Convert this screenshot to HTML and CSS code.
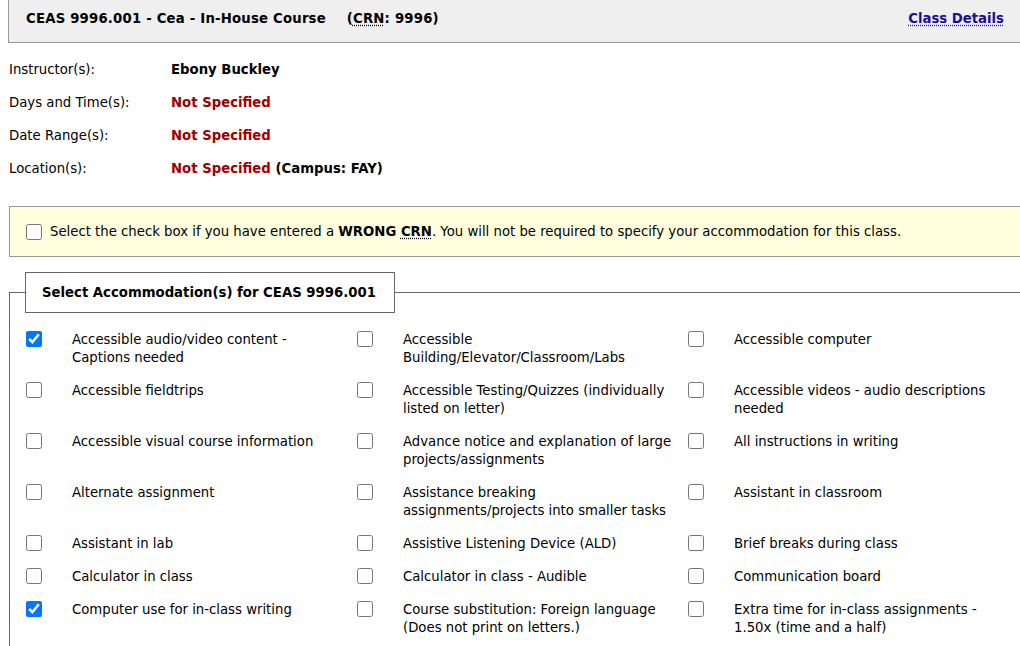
FILE: index.html
```html
<!DOCTYPE html>
<html>
<head>
<meta charset="utf-8">
<link rel="stylesheet" href="styles.css">
</head>
<body>
<div class="page">
  <div class="course-header">
    <div class="course-title">CEAS 9996.001 - Cea - In-House Course <span class="crn">(<abbr>CRN</abbr>: 9996)</span></div>
    <a class="details-link" href="#">Class Details</a>
  </div>

  <table class="info">
    <tr><td class="info-label">Instructor(s):</td><td class="info-value">Ebony Buckley</td></tr>
    <tr><td class="info-label">Days and Time(s):</td><td class="info-value"><span class="missing">Not Specified</span></td></tr>
    <tr><td class="info-label">Date Range(s):</td><td class="info-value"><span class="missing">Not Specified</span></td></tr>
    <tr><td class="info-label">Location(s):</td><td class="info-value"><span class="missing">Not Specified</span> (Campus: FAY)</td></tr>
  </table>

  <div class="notice">
    <input type="checkbox" class="cb">
    <span>Select the check box if you have entered a <b>WRONG <abbr>CRN</abbr></b>. You will not be required to specify your accommodation for this class.</span>
  </div>

  <fieldset class="accom">
    <legend>Select Accommodation(s) for CEAS 9996.001</legend>
    <div class="grid">
      <label class="item"><input type="checkbox" class="cb" checked><span class="txt">Accessible audio/video content - Captions needed</span></label>
      <label class="item"><input type="checkbox" class="cb"><span class="txt">Accessible Building/Elevator/Classroom/Labs</span></label>
      <label class="item"><input type="checkbox" class="cb"><span class="txt">Accessible computer</span></label>

      <label class="item"><input type="checkbox" class="cb"><span class="txt">Accessible fieldtrips</span></label>
      <label class="item"><input type="checkbox" class="cb"><span class="txt">Accessible Testing/Quizzes (individually listed on letter)</span></label>
      <label class="item"><input type="checkbox" class="cb"><span class="txt">Accessible videos - audio descriptions needed</span></label>

      <label class="item"><input type="checkbox" class="cb"><span class="txt">Accessible visual course information</span></label>
      <label class="item"><input type="checkbox" class="cb"><span class="txt">Advance notice and explanation of large projects/assignments</span></label>
      <label class="item"><input type="checkbox" class="cb"><span class="txt">All instructions in writing</span></label>

      <label class="item"><input type="checkbox" class="cb"><span class="txt">Alternate assignment</span></label>
      <label class="item"><input type="checkbox" class="cb"><span class="txt">Assistance breaking assignments/projects into smaller tasks</span></label>
      <label class="item"><input type="checkbox" class="cb"><span class="txt">Assistant in classroom</span></label>

      <label class="item"><input type="checkbox" class="cb"><span class="txt">Assistant in lab</span></label>
      <label class="item"><input type="checkbox" class="cb"><span class="txt">Assistive Listening Device (ALD)</span></label>
      <label class="item"><input type="checkbox" class="cb"><span class="txt">Brief breaks during class</span></label>

      <label class="item"><input type="checkbox" class="cb"><span class="txt">Calculator in class</span></label>
      <label class="item"><input type="checkbox" class="cb"><span class="txt">Calculator in class - Audible</span></label>
      <label class="item"><input type="checkbox" class="cb"><span class="txt">Communication board</span></label>

      <label class="item"><input type="checkbox" class="cb" checked><span class="txt">Computer use for in-class writing</span></label>
      <label class="item"><input type="checkbox" class="cb"><span class="txt">Course substitution: Foreign language (Does not print on letters.)</span></label>
      <label class="item"><input type="checkbox" class="cb"><span class="txt">Extra time for in-class assignments - 1.50x (time and a half)</span></label>
    </div>
  </fieldset>
</div>
</body>
</html>
```

FILE: styles.css
```css
html, body {
  margin: 0;
  padding: 0;
  overflow: hidden;
  background: #ffffff;
}

body {
  font-family: "DejaVu Sans", Verdana, sans-serif;
  font-size: 13.25px;
  color: #000;
}

.page {
  width: 1060px;
}

abbr {
  text-decoration: underline dotted;
  text-underline-offset: 2px;
}

.course-header {
  margin-left: 8px;
  height: 43px;
  box-sizing: border-box;
  border: 1px solid #999;
  border-top: none;
  background: #efefef;
  display: flex;
  justify-content: space-between;
  align-items: flex-start;
  padding: 10px 55px 0 17px;
}

.course-title {
  font-weight: bold;
  line-height: 18px;
  letter-spacing: 0.2px;
}

.crn {
  margin-left: 16px;
}

.details-link {
  color: #1a0d99;
  font-weight: bold;
  line-height: 18px;
  text-decoration: underline dotted;
  text-underline-offset: 2px;
}

.info {
  border-collapse: collapse;
  margin: 10px 0 0 9px;
}

.info td {
  padding: 0;
  height: 33px;
  line-height: 18px;
}

.info-label {
  width: 162px;
}

.info-value {
  font-weight: bold;
}

.missing {
  color: #a00000;
}

.notice {
  margin: 21px 0 0 9px;
  height: 51px;
  box-sizing: border-box;
  border: 1px solid #999;
  border-right: none;
  background: #ffffdd;
  display: flex;
  align-items: center;
  gap: 8px;
  padding: 0 0 0 16px;
}

.cb {
  width: 16px;
  height: 16px;
  margin: 0;
  flex: none;
  accent-color: #0075ff;
}

.accom {
  margin: 15px 0 0 9px;
  padding: 0;
  border: 1px solid #666;
  border-right: none;
  min-width: 0;
}

.accom legend {
  margin-left: 15px;
  border: 1px solid #666;
  padding: 0 18px 0 16px;
  height: 41px;
  box-sizing: border-box;
  line-height: 39px;
  font-weight: bold;
}

.grid {
  display: grid;
  grid-template-columns: repeat(3, 331px);
  padding: 11px 0 30px 16px;
}

.item {
  display: flex;
  align-items: flex-start;
  gap: 30px;
  padding: 7px 0 8px 0;
  line-height: 18px;
}

.txt {
  width: 273px;
}
```
